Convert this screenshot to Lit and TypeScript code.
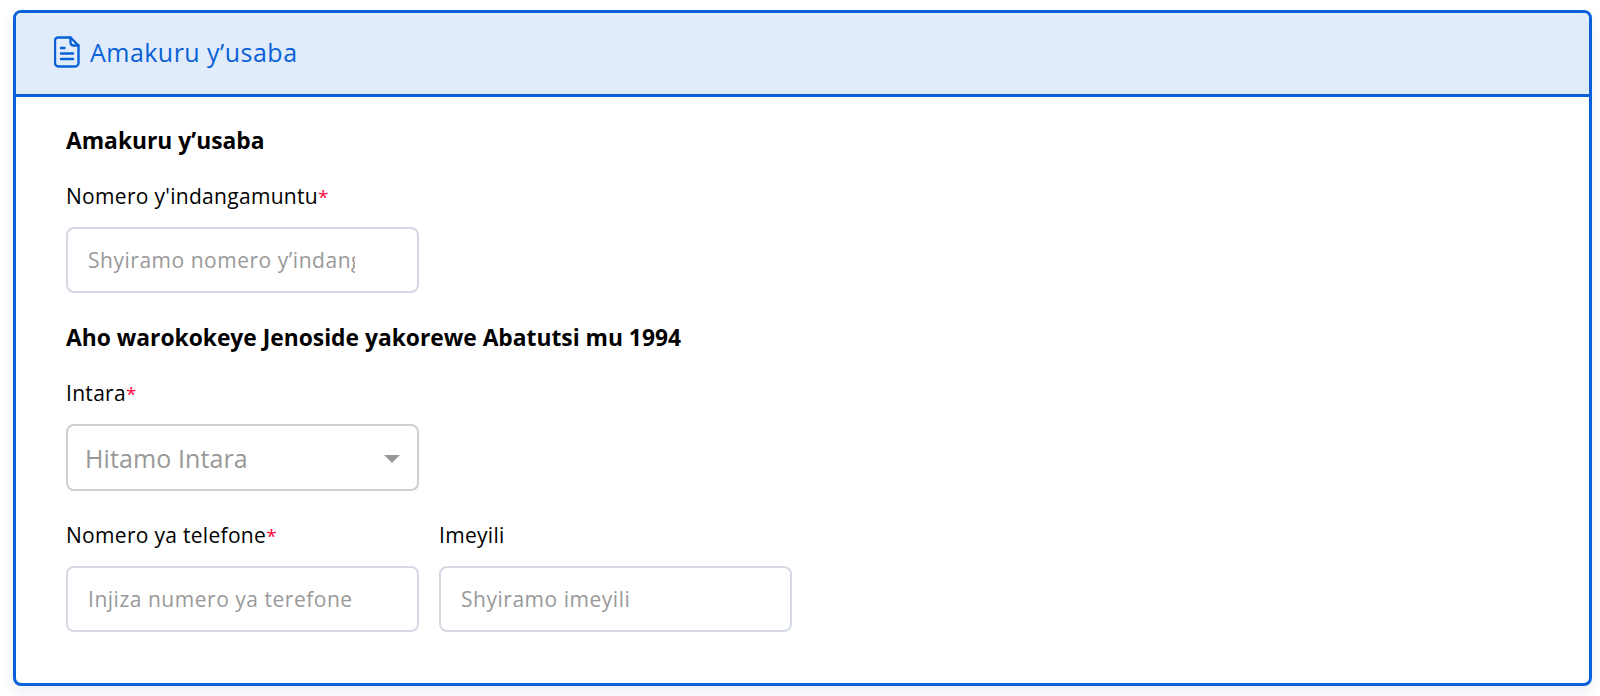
import { LitElement, html, css } from 'lit'
import { customElement } from 'lit/decorators.js'

@customElement('app-root')
export class AppRoot extends LitElement {
    static styles = css`
        :host {
            display: block;
            font-family: "Open Sans", "Noto Sans", sans-serif;
            color: #000;
            background: #fff;
            height: 696px;
            overflow: hidden;
            box-sizing: border-box;
            padding: 10px 8px 0 13px;
        }

        .card {
            height: 676px;
            box-sizing: border-box;
            border: 3px solid #0a60d8;
            border-radius: 8px;
            background: #fff;
            box-shadow: 0 6px 14px rgba(30, 60, 110, 0.09);
            overflow: hidden;
        }

        .card-header {
            display: flex;
            align-items: center;
            gap: 10px;
            height: 78px;
            padding: 0 0 3px 38px;
            background: #e0ecf9;
            border-bottom: 3px solid #0a60d8;
            color: #0a60d8;
            font-size: 25px;
            letter-spacing: 0.47px;
        }

        .card-header svg {
            display: block;
        }

        .card-body {
            display: flex;
            flex-direction: column;
            align-items: flex-start;
            padding: 29px 50px 0;
        }

        h2 {
            margin: 0;
            font-size: 22.8px;
            line-height: 30px;
            font-weight: 700;
        }

        .second {
            margin-top: 30px;
        }

        .row {
            display: flex;
            gap: 20px;
        }

        .field {
            display: flex;
            flex-direction: column;
            width: 353px;
            margin-top: 26px;
        }

        .row.spaced {
            margin-top: 4px;
        }

        label {
            height: 28px;
            font-size: 21px;
            letter-spacing: 0.3px;
            line-height: 28px;
            margin-bottom: 17px;
        }

        label span {
            color: #ff0a3c;
            font-size: 19px;
        }

        input,
        select {
            box-sizing: border-box;
            width: 353px;
            height: 66px;
            margin: 0;
            font-family: inherit;
            background: #fff;
            outline: none;
            border-radius: 8px;
        }

        input {
            border: 2px solid #d4d9e4;
            padding: 0 20px;
            font-size: 21px;
            letter-spacing: 0.52px;
        }

        input.clipped {
            padding-right: 62px;
        }

        input::placeholder {
            color: #999;
            opacity: 1;
        }

        .select-wrap {
            position: relative;
            height: 67px;
        }

        select {
            appearance: none;
            height: 67px;
            border: 2px solid #cfcfcf;
            padding: 0 17px;
            font-size: 25px;
            letter-spacing: 0.1px;
            color: #999;
        }

        .caret {
            position: absolute;
            top: 31px;
            right: 19px;
            width: 0;
            height: 0;
            border-left: 8px solid transparent;
            border-right: 8px solid transparent;
            border-top: 8px solid #999;
        }
    `;

    render() {
        return html`
        <div class="card">
            <div class="card-header">
                <svg width="26" height="32" viewBox="0 0 26 32" fill="none" stroke="currentColor" stroke-width="2.4" stroke-linejoin="round" stroke-linecap="round">
                    <path d="M4 1.5h12.5l8 8V27a3.5 3.5 0 0 1-3.5 3.5H4.5A3.5 3.5 0 0 1 1 27V4.500A3 3 0 0 1 4 1.500z"/>
                    <path d="M16.500 1.500v5a3 3 0 0 0 3 3h5"/>
                    <path d="M7 12h3.500M7 17.500h12M7 23h12"/>
                </svg>
                Amakuru y’usaba
            </div>
            <div class="card-body">
                <h2>Amakuru y’usaba</h2>
                <div class="field">
                    <label>Nomero y'indangamuntu<span>*</span></label>
                    <input class="clipped" type="text" placeholder="Shyiramo nomero y’indangamuntu">
                </div>
                <h2 class="second">Aho warokokeye Jenoside yakorewe Abatutsi mu 1994</h2>
                <div class="field">
                    <label>Intara<span>*</span></label>
                    <div class="select-wrap">
                        <select><option>Hitamo Intara</option></select>
                        <div class="caret"></div>
                    </div>
                </div>
                <div class="row spaced">
                    <div class="field">
                        <label>Nomero ya telefone<span>*</span></label>
                        <input type="tel" placeholder="Injiza numero ya terefone">
                    </div>
                    <div class="field">
                        <label>Imeyili</label>
                        <input type="email" placeholder="Shyiramo imeyili">
                    </div>
                </div>
            </div>
        </div>
    `;
    }
}
